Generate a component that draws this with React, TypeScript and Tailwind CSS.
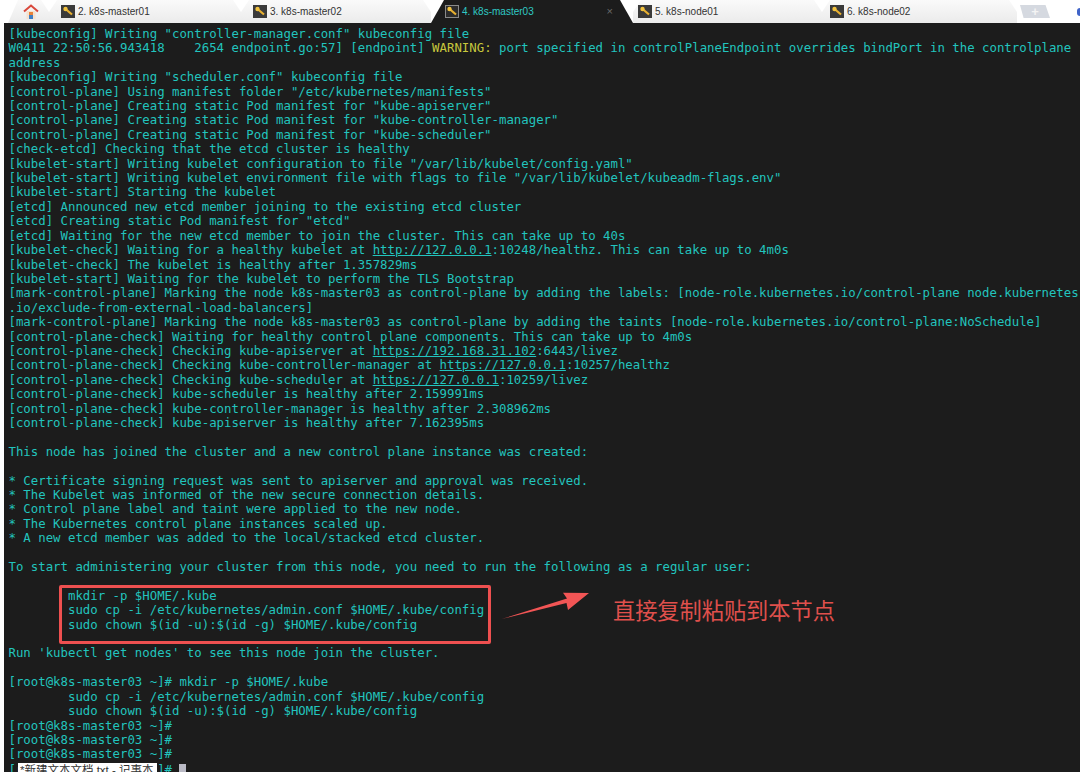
import React from "react";

const outputLines: React.ReactNode[] = [
  `[kubeconfig] Writing "controller-manager.conf" kubeconfig file`,
  <>W0411 22:50:56.943418    2654 endpoint.go:57] [endpoint] <span className="text-[#c8c83c]">WARNING:</span> port specified in controlPlaneEndpoint overrides bindPort in the controlplane</>,
  `address`,
  `[kubeconfig] Writing "scheduler.conf" kubeconfig file`,
  `[control-plane] Using manifest folder "/etc/kubernetes/manifests"`,
  `[control-plane] Creating static Pod manifest for "kube-apiserver"`,
  `[control-plane] Creating static Pod manifest for "kube-controller-manager"`,
  `[control-plane] Creating static Pod manifest for "kube-scheduler"`,
  `[check-etcd] Checking that the etcd cluster is healthy`,
  `[kubelet-start] Writing kubelet configuration to file "/var/lib/kubelet/config.yaml"`,
  `[kubelet-start] Writing kubelet environment file with flags to file "/var/lib/kubelet/kubeadm-flags.env"`,
  `[kubelet-start] Starting the kubelet`,
  `[etcd] Announced new etcd member joining to the existing etcd cluster`,
  `[etcd] Creating static Pod manifest for "etcd"`,
  `[etcd] Waiting for the new etcd member to join the cluster. This can take up to 40s`,
  <>[kubelet-check] Waiting for a healthy kubelet at <u>http://127.0.0.1</u>:10248/healthz. This can take up to 4m0s</>,
  `[kubelet-check] The kubelet is healthy after 1.357829ms`,
  `[kubelet-start] Waiting for the kubelet to perform the TLS Bootstrap`,
  `[mark-control-plane] Marking the node k8s-master03 as control-plane by adding the labels: [node-role.kubernetes.io/control-plane node.kubernetes`,
  `.io/exclude-from-external-load-balancers]`,
  `[mark-control-plane] Marking the node k8s-master03 as control-plane by adding the taints [node-role.kubernetes.io/control-plane:NoSchedule]`,
  `[control-plane-check] Waiting for healthy control plane components. This can take up to 4m0s`,
  <>[control-plane-check] Checking kube-apiserver at <u>https://192.168.31.102</u>:6443/livez</>,
  <>[control-plane-check] Checking kube-controller-manager at <u>https://127.0.0.1</u>:10257/healthz</>,
  <>[control-plane-check] Checking kube-scheduler at <u>https://127.0.0.1</u>:10259/livez</>,
  `[control-plane-check] kube-scheduler is healthy after 2.159991ms`,
  `[control-plane-check] kube-controller-manager is healthy after 2.308962ms`,
  `[control-plane-check] kube-apiserver is healthy after 7.162395ms`,
  ``,
  `This node has joined the cluster and a new control plane instance was created:`,
  ``,
  `* Certificate signing request was sent to apiserver and approval was received.`,
  `* The Kubelet was informed of the new secure connection details.`,
  `* Control plane label and taint were applied to the new node.`,
  `* The Kubernetes control plane instances scaled up.`,
  `* A new etcd member was added to the local/stacked etcd cluster.`,
  ``,
  `To start administering your cluster from this node, you need to run the following as a regular user:`,
  ``,
  `        mkdir -p $HOME/.kube`,
  `        sudo cp -i /etc/kubernetes/admin.conf $HOME/.kube/config`,
  `        sudo chown $(id -u):$(id -g) $HOME/.kube/config`,
  ``,
  `Run 'kubectl get nodes' to see this node join the cluster.`,
  ``,
  `[root@k8s-master03 ~]# mkdir -p $HOME/.kube`,
  `        sudo cp -i /etc/kubernetes/admin.conf $HOME/.kube/config`,
  `        sudo chown $(id -u):$(id -g) $HOME/.kube/config`,
  `[root@k8s-master03 ~]#`,
  `[root@k8s-master03 ~]#`,
  `[root@k8s-master03 ~]#`,
];

const tabs = [
  { label: "2. k8s-master01", box: "w-[192px] pl-[12px]" },
  { label: "3. k8s-master02", box: "w-[190px] pl-[12px]" },
  { label: "4. k8s-master03", box: "w-[202px] pl-[14px]", active: true },
  { label: "5. k8s-node01", box: "w-[189px] pl-[5px]" },
  { label: "6. k8s-node02", box: "w-[195px] pl-[8px]" },
];

const inactiveTab =
  "flex h-full items-center gap-[3px] bg-gradient-to-b from-[#fafafa] to-[#ebebeb] [clip-path:polygon(0_100%,0_12px,8px_0,calc(100%-8px)_0,100%_12px,100%_100%)]";

function KeyIcon({ active }: { active?: boolean }) {
  return (
    <svg width="14" height="13" viewBox="0 0 14 13" className="shrink-0">
      <rect x="0.5" y="0.5" width="13" height="12" fill={active ? "#2c2c2c" : "#3a3a3a"} stroke={active ? "#8a8a8a" : "#3a3a3a"} />
      <path d="M4 3.5 L11 9.5" stroke="#e8b030" strokeWidth="2.2" />
      <circle cx="4.5" cy="4" r="2.2" fill="#f2c23e" />
    </svg>
  );
}

function HomeIcon() {
  return (
    <svg width="16" height="15" viewBox="0 0 16 15">
      <path d="M1 7.5 L8 1.5 L15 7.5" fill="none" stroke="#d9483b" strokeWidth="2" />
      <rect x="3.5" y="7" width="9" height="8" fill="#f6e2cf" />
      <rect x="6" y="8" width="4" height="3" fill="#e8823a" />
      <rect x="6" y="11" width="4" height="4" fill="#3f7fc4" />
    </svg>
  );
}

function TabBar() {
  return (
    <div className="flex h-[23px] items-center bg-white font-['Liberation_Sans',sans-serif] text-[10px] text-[#333333]">
      <div className="ml-[8px] flex h-full w-[41px] items-center justify-center bg-gradient-to-b from-[#fafafa] to-[#ebebeb] pl-[5px] [clip-path:polygon(0_100%,10px_0,calc(100%-8px)_0,100%_12px,100%_100%)]">
        <HomeIcon />
      </div>
      {tabs.map((tab) =>
        tab.active ? (
          <div
            key={tab.label}
            className={`${tab.box} flex h-full items-center gap-[3px] bg-[#1c1c1c] text-[#2fc9c4] [clip-path:polygon(0_100%,13px_0,calc(100%-13px)_0,100%_100%)]`}
          >
            <KeyIcon active />
            <span className="flex-1">{tab.label}</span>
            <span className="pr-[20px] text-[11px] text-[#6a6a6a]">×</span>
          </div>
        ) : (
          <div key={tab.label} className={`${tab.box} ${inactiveTab}`}>
            <KeyIcon />
            <span>{tab.label}</span>
          </div>
        ),
      )}
      <div className="ml-[3px] flex h-[13px] w-[30px] items-center justify-center bg-[#d5d9e0] text-[13px] font-bold leading-none text-[#f4f4f4] [clip-path:polygon(0_0,85%_0,100%_100%,12%_100%)]">
        +
      </div>
      <div className="ml-auto h-[8px] w-[3px] rounded-l-full bg-[#3f63c8]" />
    </div>
  );
}

export default function App() {
  return (
    <div className="h-[772px] w-[1080px] overflow-hidden bg-white">
      <TabBar />

      <div className="relative ml-[4px] h-[749px] overflow-hidden bg-[#1c1c1c] pl-[4.5px] pt-[4px] font-['DejaVu_Sans_Mono',monospace] text-[12.35px] leading-[14.42px] text-[#22c4be]">
        {outputLines.map((line, i) => (
          <div key={i} className="h-[14.42px] whitespace-pre">
            {line}
          </div>
        ))}

        {/* last prompt, notepad tooltip sits over it */}
        <div className="h-[14.42px] whitespace-pre">
          [root@k8s-master03 ~]# <span className="inline-block h-[12px] w-[7px] translate-y-[2px] bg-[#b9b9c4]" />
        </div>

        <div className="absolute left-[14px] top-[740px] h-[9px] w-[139px] overflow-hidden bg-white pl-[2px] font-['Liberation_Sans','Noto_Sans_CJK_SC',sans-serif] text-[11.5px] leading-[15px] text-[#333333]">
          *新建文本文档.txt - 记事本
        </div>

        {/* red annotation */}
        <div className="absolute left-[55px] top-[562px] h-[59px] w-[432px] rounded-[2px] border-[3px] border-[#ee5050]" />
        <svg className="absolute left-[496px] top-[566px]" width="92" height="36" viewBox="0 0 92 36">
          <path d="M1.7 30 L67 9.5 L63 3.7 L89 4 L68 21 L66.5 14 Z" fill="#f25555" />
        </svg>
        <div className="absolute left-[609px] top-[571px] font-['Noto_Sans_CJK_SC',sans-serif] text-[22.2px] leading-[30px] text-[#e0504c]">
          直接复制粘贴到本节点
        </div>
      </div>
    </div>
  );
}
